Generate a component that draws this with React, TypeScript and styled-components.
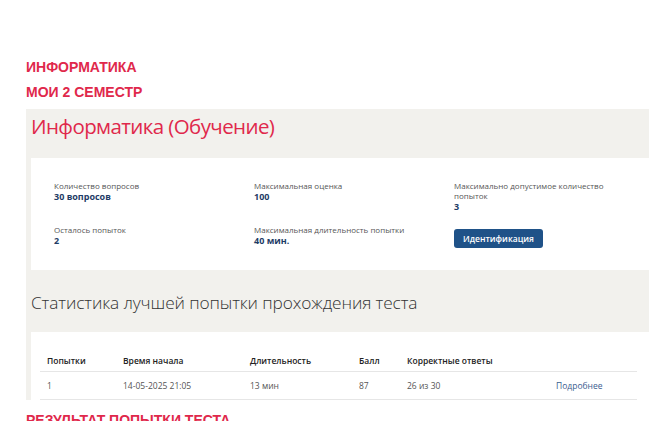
import React from "react";
import styled, { createGlobalStyle } from "styled-components";

const GlobalStyle = createGlobalStyle`
  html, body {
    margin: 0;
    padding: 0;
    background: #fff;
    overflow: hidden;
  }
  body {
    font-family: "Open Sans", "Noto Sans", sans-serif;
  }
`;

const Page = styled.div`
  width: 657px;
  height: 421px;
  overflow: hidden;
  padding: 55px 8px 0 26px;
  box-sizing: border-box;
`;

const Crumb = styled.div<{ $gap?: number }>`
  font-family: "Liberation Sans", Arial, sans-serif;
  font-weight: 700;
  font-size: 14px;
  line-height: 25px;
  color: #e0284b;
  text-transform: uppercase;
  margin-top: ${(p) => p.$gap ?? 0}px;
`;

const Panel = styled.div`
  margin-top: 4px;
  width: 623px;
  background: #f2f1ed;
  padding-left: 5px;
  box-sizing: border-box;
`;

const Title = styled.h1`
  margin: 0;
  height: 49px;
  font-size: 20.5px;
  font-weight: 500;
  line-height: 34px;
  color: #e0284b;
  letter-spacing: -0.6px;
`;

const InfoCard = styled.div`
  background: #fff;
  height: 112px;
  padding: 23px 0 0 23px;
  box-sizing: border-box;
  display: grid;
  grid-template-columns: 200px 200px 170px;
  row-gap: 12px;
  align-content: start;
`;

const Field = styled.div`
  display: flex;
  flex-direction: column;
  align-items: flex-start;
`;

const Label = styled.div`
  font-size: 8px;
  line-height: 10px;
  color: #555;
`;

const Value = styled.div`
  font-size: 9px;
  line-height: 12px;
  font-weight: 700;
  color: #1e3c66;
`;

const Button = styled.button`
  margin-top: 4px;
  background: #1f5288;
  color: #fff;
  border: none;
  border-radius: 3px;
  font-family: inherit;
  font-size: 8.5px;
  font-weight: 600;
  height: 19px;
  width: 89px;
  padding: 0;
  cursor: pointer;
`;

const StatTitle = styled.h2`
  margin: 0;
  height: 62px;
  display: flex;
  align-items: center;
  padding-top: 3px;
  box-sizing: border-box;
  font-size: 17.3px;
  font-weight: 300;
  color: #333;
  letter-spacing: -0.1px;
`;

const TableCard = styled.div`
  background: #fff;
  height: 68px;
  padding: 17px 12px 0 9px;
  box-sizing: border-box;
`;

const Table = styled.table`
  width: 100%;
  border-collapse: collapse;
  table-layout: fixed;
  font-size: 8.5px;
`;

const Th = styled.th<{ $w?: number }>`
  text-align: left;
  font-weight: 600;
  color: #222;
  height: 22px;
  padding: 0 0 0 7px;
  border-bottom: 1px solid #e6e6e6;
  width: ${(p) => (p.$w ? `${p.$w - 7}px` : "auto")};
`;

const Td = styled.td`
  color: #555;
  height: 27px;
  padding: 0 0 0 7px;
  border-bottom: 1px solid #e6e6e6;
`;

const More = styled.a`
  color: #3a5d8f;
  text-decoration: none;
`;

const info = [
  { label: "Количество вопросов", value: "30 вопросов" },
  { label: "Максимальная оценка", value: "100" },
  { label: "Максимально допустимое количество попыток", value: "3" },
  { label: "Осталось попыток", value: "2" },
  { label: "Максимальная длительность попытки", value: "40 мин." },
];

export default function App() {
  return (
    <>
      <GlobalStyle />
      <Page>
        <Crumb>Информатика</Crumb>
        <Crumb>Мои 2 семестр</Crumb>
        <Panel>
          <Title>Информатика (Обучение)</Title>
          <InfoCard>
            {info.map((f) => (
              <Field key={f.label}>
                <Label>{f.label}</Label>
                <Value>{f.value}</Value>
              </Field>
            ))}
            <Field>
              <Button type="button">Идентификация</Button>
            </Field>
          </InfoCard>
          <StatTitle>Статистика лучшей попытки прохождения теста</StatTitle>
          <TableCard>
            <Table>
              <thead>
                <tr>
                  <Th $w={76}>Попытки</Th>
                  <Th $w={127}>Время начала</Th>
                  <Th $w={109}>Длительность</Th>
                  <Th $w={48}>Балл</Th>
                  <Th $w={149}>Корректные ответы</Th>
                  <Th />
                </tr>
              </thead>
              <tbody>
                <tr>
                  <Td>1</Td>
                  <Td>14-05-2025 21:05</Td>
                  <Td>13 мин</Td>
                  <Td>87</Td>
                  <Td>26 из 30</Td>
                  <Td>
                    <More href="#">Подробнее</More>
                  </Td>
                </tr>
              </tbody>
            </Table>
          </TableCard>
        </Panel>
        <Crumb $gap={8}>Результат попытки теста</Crumb>
      </Page>
    </>
  );
}
